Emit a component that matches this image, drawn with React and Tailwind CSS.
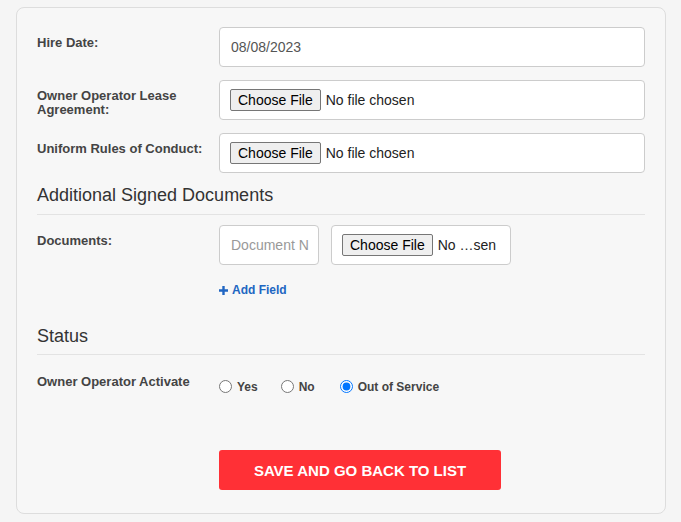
import React from "react";

function FileBox({ text, className }) {
  return (
    <div className={"h-[40px] rounded-[4px] border border-[#cccccc] bg-white flex items-center " + (className || "pl-[10px]")}>
      <span className="h-[22px] px-[7px] flex items-center rounded-[2px] border border-[#767676] bg-[#efefef] text-[14px] text-black leading-none">
        Choose File
      </span>
      <span className="ml-[5px] text-[14px] text-[#222] leading-none">{text}</span>
    </div>
  );
}

function Row({ label, children, mt }) {
  return (
    <div className={"flex " + (mt || "")}>
      <div className="w-[182px] shrink-0 pt-[9px] pr-[12px] text-[13px] font-bold leading-[14px] text-[#444]">{label}</div>
      <div className="flex-1">{children}</div>
    </div>
  );
}

function Radio({ label, checked, className }) {
  return (
    <label className={"flex items-center " + (className || "")}>
      <input type="radio" name="act" defaultChecked={checked} className="m-0 w-[13px] h-[13px] accent-[#0075ff]" />
      <span className="ml-[5px] text-[12px] font-bold text-[#444] leading-none">{label}</span>
    </label>
  );
}

export default function App() {
  return (
    <div className="min-h-[522px] bg-[#f5f5f5] pt-[7px] px-[16px] pb-[9px]" style={{ fontFamily: '"Liberation Sans", Arial, sans-serif' }}>
      <div className="w-[650px] rounded-[8px] border border-[#dddddd] bg-[#f7f7f7] px-[20px] pt-[19px] pb-[23px]">
        <Row label="Hire Date:">
          <div className="h-[40px] rounded-[4px] border border-[#cccccc] bg-white flex items-center pl-[11px] text-[14px] text-[#555]">
            08/08/2023
          </div>
        </Row>
        <Row label={<>Owner Operator Lease<br />Agreement:</>} mt="mt-[13px]">
          <FileBox text="No file chosen" />
        </Row>
        <Row label="Uniform Rules of Conduct:" mt="mt-[13px]">
          <FileBox text="No file chosen" />
        </Row>

        <div className="mt-[12px] pb-[9px] border-b border-[#e3e3e3] text-[18px] leading-[20px] text-[#333]">
          Additional Signed Documents
        </div>

        <Row label="Documents:" mt="mt-[10px]">
          <div className="flex">
            <div className="w-[100px] h-[40px] rounded-[4px] border border-[#cccccc] bg-white flex items-center pl-[11px] text-[14px] text-[#999] overflow-hidden whitespace-nowrap">
              Document N
            </div>
            <FileBox text="No …sen" className="ml-[12px] w-[180px] pl-[10px]" />
          </div>
          <div className="mt-[19px] flex items-center text-[12px] font-bold text-[#2166c2] leading-none">
            <svg width="9" height="9" viewBox="0 0 9 9" className="mr-[4px]">
              <path d="M3.3 0h2.4v3.3H9v2.4H5.7V9H3.3V5.7H0V3.3h3.3z" fill="#2166c2" />
            </svg>
            Add Field
          </div>
        </Row>

        <div className="mt-[30px] pb-[8px] border-b border-[#e3e3e3] text-[18px] leading-[20px] text-[#333]">
          Status
        </div>

        <Row label="Owner Operator Activate" mt="mt-[11px]">
          <div className="flex items-center pt-[14px]">
            <Radio label="Yes" />
            <Radio label="No" className="ml-[23px]" />
            <Radio label="Out of Service" checked className="ml-[25px]" />
          </div>
        </Row>

        <div className="mt-[57px] flex">
          <div className="w-[182px] shrink-0" />
          <button className="w-[282px] h-[40px] rounded-[3px] bg-[#ff3036] text-white text-[15px] font-bold leading-none">
            SAVE AND GO BACK TO LIST
          </button>
        </div>
      </div>
    </div>
  );
}
